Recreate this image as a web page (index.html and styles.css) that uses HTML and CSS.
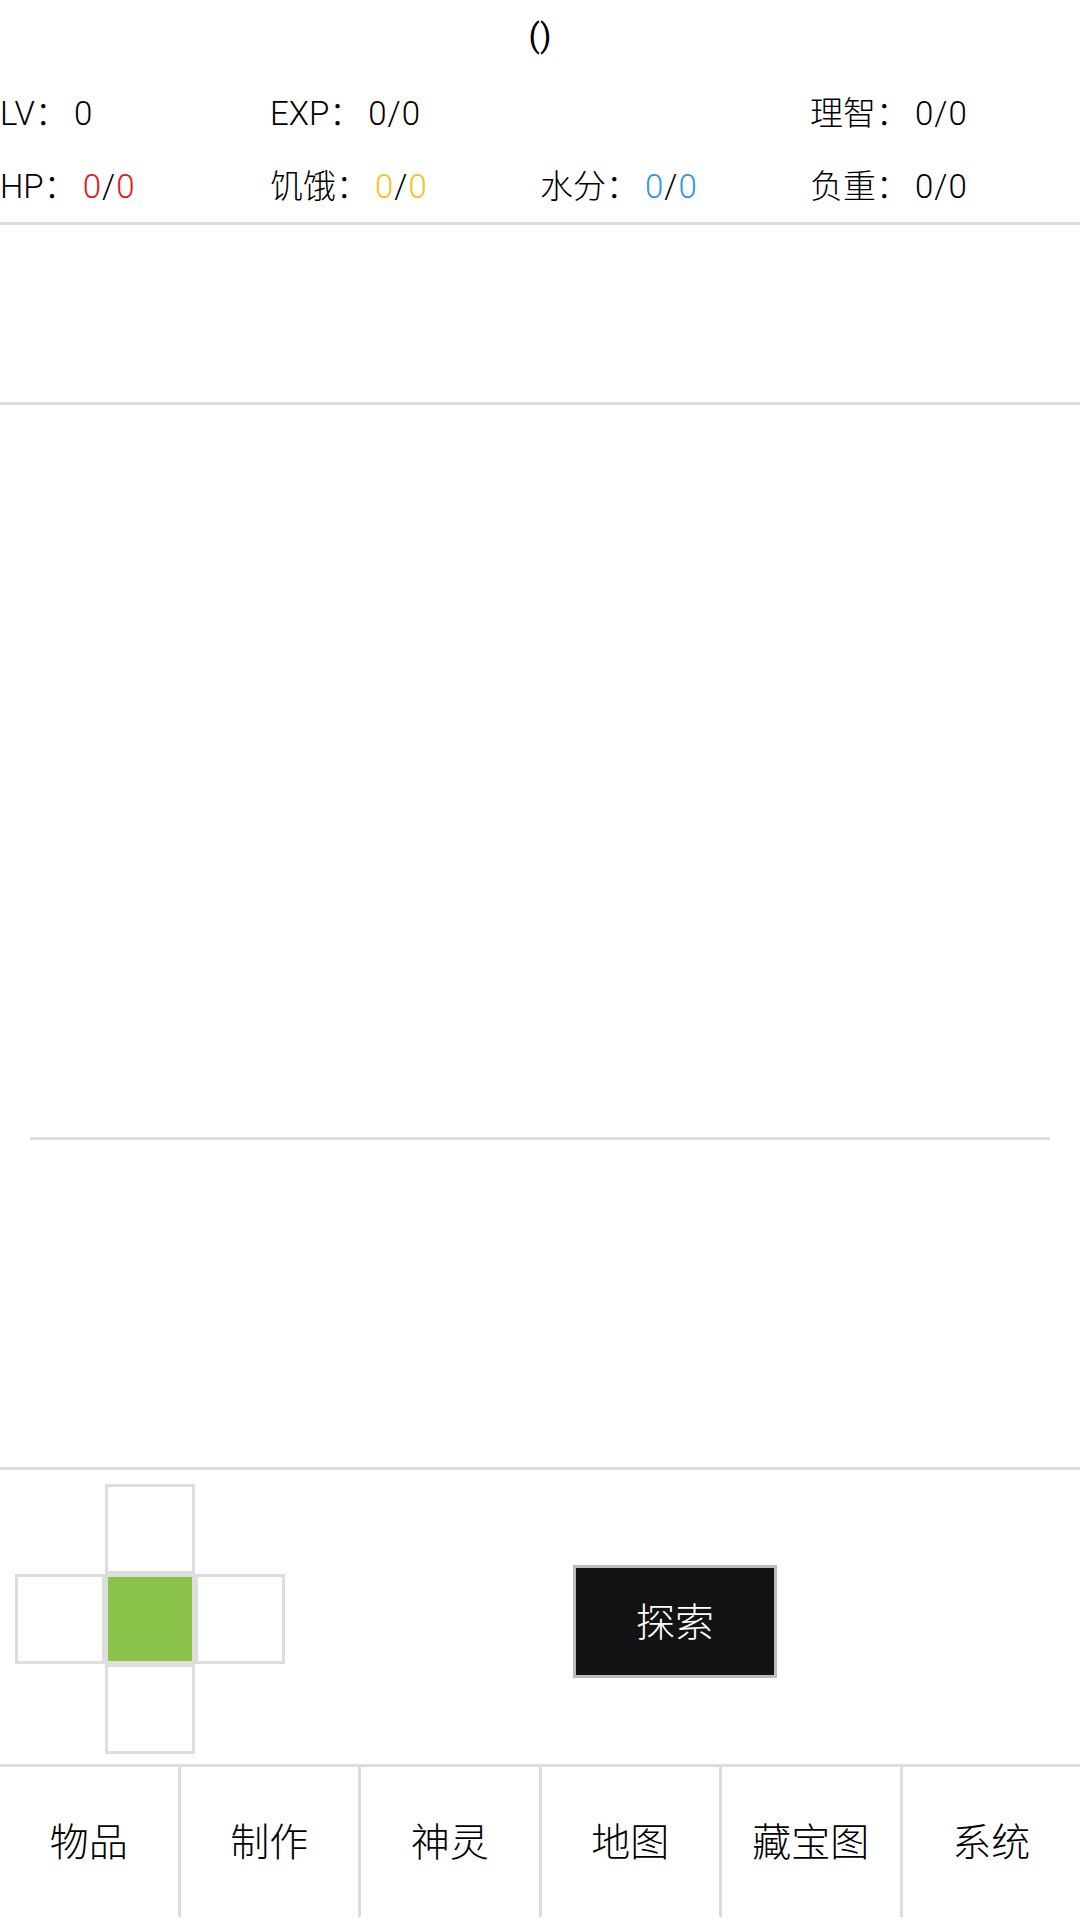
FILE: index.html
```html
<!DOCTYPE html>
<html lang="zh-CN">
<head>
    <meta charset="UTF-8">
    <meta name="viewport" content="width=device-width, initial-scale=1.0">
    <title>探索</title>
    <link rel="stylesheet" href="styles.css">
</head>
<body>
    <header class="title">()</header>

    <!-- 角色状态 -->
    <div class="stats">
        <div class="stat-row">
            <span class="stat">LV：<span class="val">0</span></span>
            <span class="stat">EXP：<span class="val">0/0</span></span>
            <span class="stat"></span>
            <span class="stat">理智：<span class="val">0/0</span></span>
        </div>
        <div class="stat-row">
            <span class="stat">HP：<span class="val"><em class="hp">0</em>/<em class="hp">0</em></span></span>
            <span class="stat">饥饿：<span class="val"><em class="hunger">0</em>/<em class="hunger">0</em></span></span>
            <span class="stat">水分：<span class="val"><em class="water">0</em>/<em class="water">0</em></span></span>
            <span class="stat">负重：<span class="val">0/0</span></span>
        </div>
    </div>

    <div class="scene"></div>

    <div class="log"></div>
    <hr class="divider">
    <div class="messages"></div>

    <!-- 方向键 + 探索 -->
    <div class="controls">
        <div class="dpad">
            <div class="cell empty"></div>
            <div class="cell"></div>
            <div class="cell empty"></div>
            <div class="cell"></div>
            <div class="cell current"></div>
            <div class="cell"></div>
            <div class="cell empty"></div>
            <div class="cell"></div>
            <div class="cell empty"></div>
        </div>
        <div class="action">
            <button class="explore-button">探索</button>
        </div>
    </div>

    <nav class="tabs">
        <div class="tab">物品</div>
        <div class="tab">制作</div>
        <div class="tab">神灵</div>
        <div class="tab">地图</div>
        <div class="tab">藏宝图</div>
        <div class="tab">系统</div>
    </nav>
</body>
</html>
```

FILE: styles.css
```css
body {
    font-family: Roboto, "Noto Sans CJK SC", sans-serif;
    font-weight: 300;
    background-color: #fff;
    color: #000;
    margin: 0;
    padding: 0;
    width: 1080px;
}

.title {
    height: 76px;
    box-sizing: border-box;
    padding-bottom: 5px;
    line-height: 71px;
    text-align: center;
    font-size: 33px;
    font-weight: 400;
}

.stats {
    border-bottom: 3px solid #ddd;
}

.stat-row {
    display: grid;
    grid-template-columns: repeat(4, 1fr);
    height: 73px;
    box-sizing: border-box;
    padding-bottom: 4px;
    align-items: center;
    font-size: 33px;
}

.val {
    margin-left: 6px;
    letter-spacing: 1px;
}

.stat em {
    font-style: normal;
}

.hp {
    color: #e8151b;
}

.hunger {
    color: #f8c117;
}

.water {
    color: #2f96e6;
}

.scene {
    height: 177px;
    border-bottom: 3px solid #ddd;
}

.log {
    height: 732px;
}

.divider {
    border: none;
    height: 3px;
    background-color: #ddd;
    margin: 0 30px;
}

.messages {
    height: 327px;
}

.controls {
    display: flex;
    align-items: center;
    height: 297px;
    box-sizing: border-box;
    border-top: 3px solid #ddd;
    padding: 15px 0 12px 15px;
}

.dpad {
    display: grid;
    grid-template-columns: repeat(3, 90px);
    grid-template-rows: repeat(3, 90px);
}

.cell {
    box-sizing: border-box;
    border: 3px solid #ddd;
}

.cell.empty {
    border: none;
}

.cell.current {
    background-color: #8bc34a;
}

.action {
    flex: 1;
    display: flex;
    justify-content: center;
    padding-right: 15px;
    padding-top: 5px;
}

.explore-button {
    width: 204px;
    height: 113px;
    box-sizing: border-box;
    border: 3px solid #bbb;
    background-color: #131313;
    color: white;
    font-family: inherit;
    font-weight: 300;
    font-size: 39px;
    padding: 0 0 5px;
}

.tabs {
    display: flex;
    height: 153px;
    box-sizing: border-box;
    border-top: 3px solid #ddd;
}

.tab {
    flex: 1;
    display: flex;
    align-items: center;
    justify-content: center;
    padding-bottom: 7px;
    font-size: 39px;
}

.tab + .tab {
    border-left: 3px solid #ddd;
}
```
